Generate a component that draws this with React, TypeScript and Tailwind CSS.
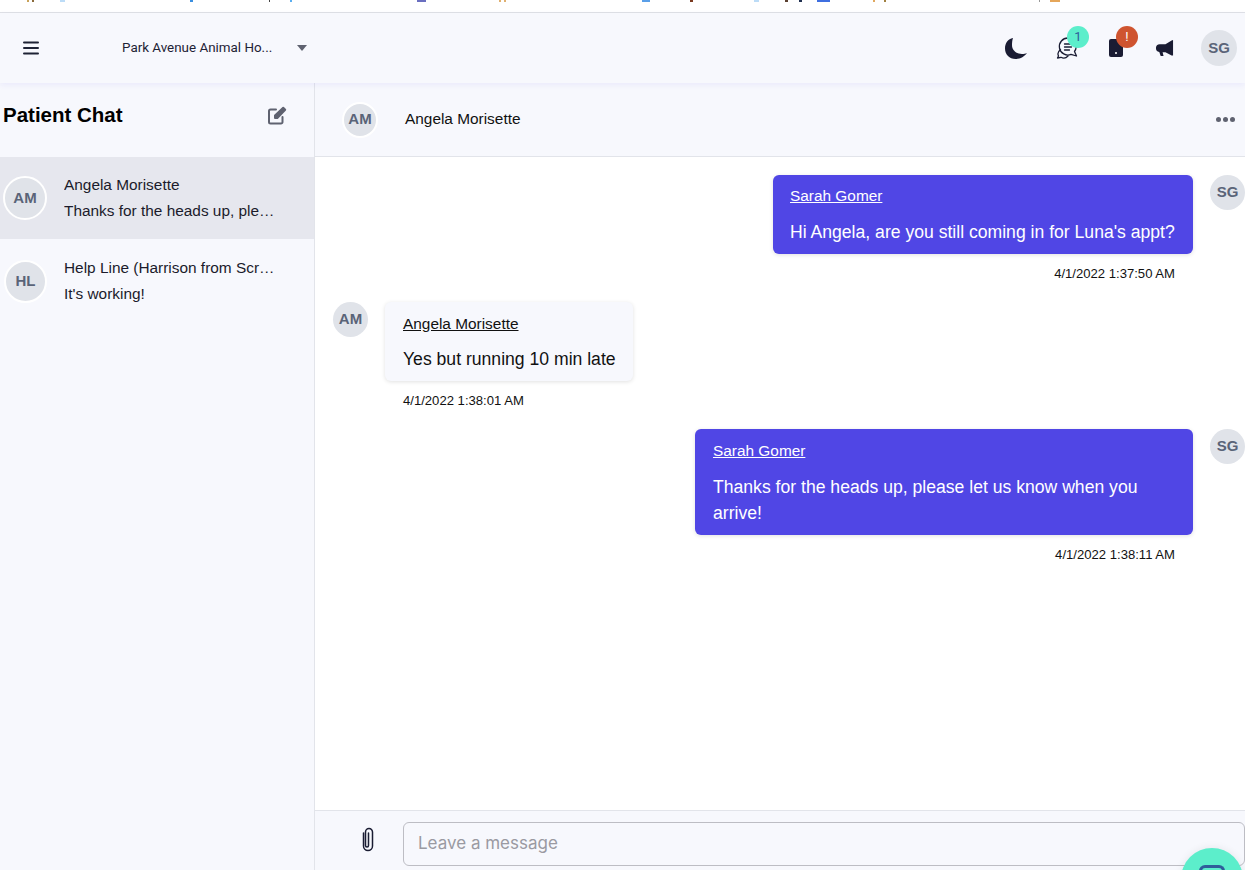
import React from "react";

const specks: { x: number; w: number; c: string }[] = [
  { x: 27, w: 2, c: "#c9a35a" },
  { x: 32, w: 2, c: "#8a6a3a" },
  { x: 60, w: 5, c: "#bcdcf7" },
  { x: 190, w: 3, c: "#3b8fe0" },
  { x: 269, w: 1, c: "#444" },
  { x: 290, w: 2, c: "#5aaef0" },
  { x: 417, w: 9, c: "#6a6fc0" },
  { x: 499, w: 2, c: "#e0b070" },
  { x: 504, w: 2, c: "#e0b070" },
  { x: 642, w: 8, c: "#5a9fe8" },
  { x: 690, w: 3, c: "#7a3a20" },
  { x: 754, w: 5, c: "#bcdcf7" },
  { x: 785, w: 3, c: "#5a4030" },
  { x: 799, w: 3, c: "#203050" },
  { x: 817, w: 13, c: "#3f6fe0" },
  { x: 873, w: 2, c: "#e0a860" },
  { x: 884, w: 2, c: "#a08040" },
  { x: 1039, w: 1, c: "#999" },
  { x: 1050, w: 10, c: "#e5a65a" },
];

function Avatar({ t, ring = false, size = "w-[35px] h-[35px]", cls = "" }: { t: string; ring?: boolean; size?: string; cls?: string }) {
  return (
    <div className={`${size} ${ring ? "border-2 border-white" : ""} ${cls} rounded-full bg-[#e0e3e9] flex items-center justify-center shrink-0 text-[#5a6478] font-bold text-[15px]`}>
      {t}
    </div>
  );
}

function Bubble({ name, text, time, mine, box, gap }: { name: string; text: React.ReactNode; time: string; mine: boolean; box: string; gap: string }) {
  return (
    <div className={`flex flex-col ${mine ? "items-end" : "items-start"}`}>
      <div className={`${box} rounded-md shadow-[0_1px_4px_rgba(0,0,0,0.12)] ${mine ? "bg-[#5046e5] text-white" : "bg-[#f7f8fd] text-[#111]"}`}>
        <div className="text-[15.4px] leading-[20px] underline">{name}</div>
        <div className={`text-[17.6px] leading-[26px] ${gap}`}>{text}</div>
      </div>
      <div className={`text-[13.1px] leading-[16px] text-[#111] mt-[12px] ${mine ? "pr-[18px]" : "pl-[18px]"}`}>{time}</div>
    </div>
  );
}

export default function App() {
  return (
    <div className="w-[1245px] h-[870px] overflow-hidden bg-white flex flex-col relative font-['Liberation_Sans',Arial,sans-serif] text-[#111]">
      <div className="h-[13px] shrink-0 border-b border-[#dfe1e5] bg-white relative">
        {specks.map((s) => (
          <div key={s.x} className="absolute top-0 h-[2px]" style={{ left: s.x, width: s.w, background: s.c }} />
        ))}
      </div>
      <header className="h-[70px] shrink-0 bg-[#f7f8fd] flex items-center shadow-[0_2px_6px_rgba(80,70,229,0.08)] z-10">
        <svg className="ml-[23px] shrink-0" width="16" height="14" viewBox="0 0 16 14" fill="#1e2235">
          <rect x="0" y="0.5" width="16" height="2" rx="1" />
          <rect x="0" y="6" width="16" height="2" rx="1" />
          <rect x="0" y="11.5" width="16" height="2" rx="1" />
        </svg>
        <div className="ml-[83px] pt-[1px] text-[13.4px] w-[160px] truncate font-['Roboto',sans-serif] text-[#1e2235]">Park Avenue Animal Ho...</div>
        <div className="ml-[15px] w-0 h-0 border-l-[5.5px] border-r-[5.5px] border-t-[6px] border-l-transparent border-r-transparent border-t-[#5f6270]" />
        <div className="ml-auto flex items-center">
          <svg width="22" height="21" viewBox="0 0 22 21" fill="#1a1c33" className="mr-[29px]">
            <path d="M8 0C3 1 0 5 0 10.5 0 16.5 4.5 21 10.5 21 15.5 21 19.5 18.5 22 15 20.5 15.8 19 16 17 16 11 16 7 12 7 7 7 4.5 7.3 2 8 0Z" />
          </svg>
          <div className="relative mr-[29px] w-[24px] h-[24px]">
            <svg width="24" height="24" viewBox="0 0 24 24" fill="none" stroke="#1a1c33" strokeWidth="1.3" strokeLinejoin="round" strokeLinecap="round">
              <path d="M12 2a8.5 8.5 0 1 0 3 16.4l5.5 1.6-2-4.5A8.5 8.5 0 0 0 12 2Z" />
              <path d="M4.5 13.5C2 15.5 1.5 18 2.5 20L1.5 22 5 21.3C7 22.4 10 22.2 12 20" />
              <path d="M8.5 8h7M8.5 11h7M8.5 14h5" />
            </svg>
            <div className="absolute -top-[10px] left-[11px] w-[22px] h-[22px] rounded-full bg-[#5ceecb] flex items-center justify-center text-[13px] text-[#2f5d9a] font-['Roboto',sans-serif]">1</div>
          </div>
          <div className="relative mr-[32px] w-[14px] h-[18px]">
            <div className="w-[14px] h-[18px] rounded-[2px] bg-[#1a1c33] flex items-end justify-center pb-[3px]">
              <div className="w-[2px] h-[2px] rounded-full bg-white" />
            </div>
            <div className="absolute -top-[13px] left-[7px] w-[22px] h-[22px] rounded-full bg-[#cf5430] flex items-center justify-center text-[13px] text-white font-['Roboto',sans-serif]">!</div>
          </div>
          <svg width="19" height="18" viewBox="0 0 20 18" fill="#1a1c33" className="mr-[27px]">
            <path d="M19 0.5V17L17.5 17 11 13.5H8L9 17.5H6L4.5 13.2C2 13 1 11 1 9 1 6.5 2.5 5 5 5H11L17.5 1Z" />
          </svg>
          <Avatar t="SG" size="w-[36px] h-[36px]" cls="mr-[8px]" />
        </div>
      </header>
      <div className="flex-1 flex min-h-0">
        <aside className="w-[315px] shrink-0 bg-[#f7f8fd] border-r border-[#e2e4ea] flex flex-col">
          <div className="h-[74px] flex items-center justify-between pl-[3px] pr-[27px] pb-[9px] shrink-0">
            <div className="text-[20.5px] font-bold text-black">Patient Chat</div>
            <svg width="20" height="20" viewBox="0 0 20 20" fill="none" stroke="#5f6270" strokeWidth="2" strokeLinecap="round" strokeLinejoin="round">
              <path d="M9 3.5H3.5A1.5 1.5 0 0 0 2 5v11a1.5 1.5 0 0 0 1.5 1.5H14a1.5 1.5 0 0 0 1.5-1.5v-5" />
              <path d="M8 9.5 16.2 1.8 18.2 3.8 10.3 12H8Z" fill="#5f6270" />
            </svg>
          </div>
          <div className="h-[82px] bg-[#e6e7ee] flex items-center pl-[3px]">
            <Avatar t="AM" ring size="w-[44px] h-[44px]" />
            <div className="ml-[17px] w-[212px] text-[#1b1b2b]">
              <div className="text-[15.4px] leading-[20px] truncate">Angela Morisette</div>
              <div className="text-[15.4px] leading-[20px] mt-[6px] truncate">Thanks for the heads up, ple…</div>
            </div>
          </div>
          <div className="h-[82px] flex items-center pl-[3px] pt-[2px]">
            <Avatar t="HL" ring size="w-[43px] h-[43px]" cls="ml-[1px] border-[#f7f8fd]" />
            <div className="ml-[17px] w-[212px] text-[#1b1b2b]">
              <div className="text-[15.4px] leading-[20px] truncate">Help Line (Harrison from Scr…</div>
              <div className="text-[15.4px] leading-[20px] mt-[6px] truncate">It's working!</div>
            </div>
          </div>
        </aside>
        <main className="flex-1 flex flex-col min-w-0">
          <div className="h-[74px] shrink-0 bg-[#f7f8fd] border-b border-[#e2e4ea] flex items-center pl-[27px] pr-[10px]">
            <Avatar t="AM" ring size="w-[36px] h-[36px]" />
            <div className="ml-[27px] pb-[2px] text-[15.4px]">Angela Morisette</div>
            <div className="ml-auto flex gap-[2px]">
              <div className="w-[5px] h-[5px] rounded-full bg-[#5f6270]" />
              <div className="w-[5px] h-[5px] rounded-full bg-[#5f6270]" />
              <div className="w-[5px] h-[5px] rounded-full bg-[#5f6270]" />
            </div>
          </div>
          <div className="flex-1 min-h-0 bg-white flex flex-col pt-[18px] pl-[18px] pr-[52px] relative">
            <div className="flex justify-end relative">
              <Bubble mine box="w-[420px] pl-[17px] pr-[10px] pt-[11px] pb-[9px] whitespace-nowrap" gap="mt-[13px]" name="Sarah Gomer" text="Hi Angela, are you still coming in for Luna's appt?" time="4/1/2022 1:37:50 AM" />
              <Avatar t="SG" cls="absolute -right-[52px] top-0" />
            </div>
            <div className="flex mt-[20px]">
              <Avatar t="AM" />
              <div className="ml-[17px]">
                <Bubble mine={false} box="w-[248px] pl-[18px] pr-[10px] pt-[12px] pb-[9px] whitespace-nowrap" gap="mt-[12px]" name="Angela Morisette" text="Yes but running 10 min late" time="4/1/2022 1:38:01 AM" />
              </div>
            </div>
            <div className="flex justify-end relative mt-[20px]">
              <Bubble mine box="w-[498px] px-[18px] pt-[12px] pb-[9px]" gap="mt-[13px]" name="Sarah Gomer" text="Thanks for the heads up, please let us know when you arrive!" time="4/1/2022 1:38:11 AM" />
              <Avatar t="SG" cls="absolute -right-[52px] top-0" />
            </div>
          </div>
          <div className="h-[60px] shrink-0 bg-[#f7f8fd] border-t border-[#e2e4ea] flex items-start pt-[11px] relative">
            <svg className="ml-[45px] mt-[5px] shrink-0" width="16" height="26" viewBox="0 0 16 26" fill="none" stroke="#1a1c33" strokeWidth="1.5" strokeLinecap="round">
              <path d="M3.5 6v13a4.5 4.5 0 0 0 9 0V5a3.5 3.5 0 0 0-7 0v13.5a1.5 1.5 0 0 0 3 0V6" />
            </svg>
            <div className="ml-[27px] w-[842px] h-[44px] border border-[#bdbdc4] rounded-md flex items-center pl-[14px] text-[17px] text-[#9a9aa2] font-['Inter',sans-serif] shrink-0">Leave a message</div>
          </div>
        </main>
      </div>
      <div className="absolute left-[1181px] top-[848px] w-[62px] h-[62px] rounded-full bg-[#5ceecb] flex justify-center pt-[17px] shadow-[0_0_8px_rgba(0,0,0,0.08)]">
        <div className="w-[26px] h-[10px] rounded-t-[6px] border-t-[3px] border-x-[3px] border-[#2f5d9a]" />
      </div>
    </div>
  );
}
